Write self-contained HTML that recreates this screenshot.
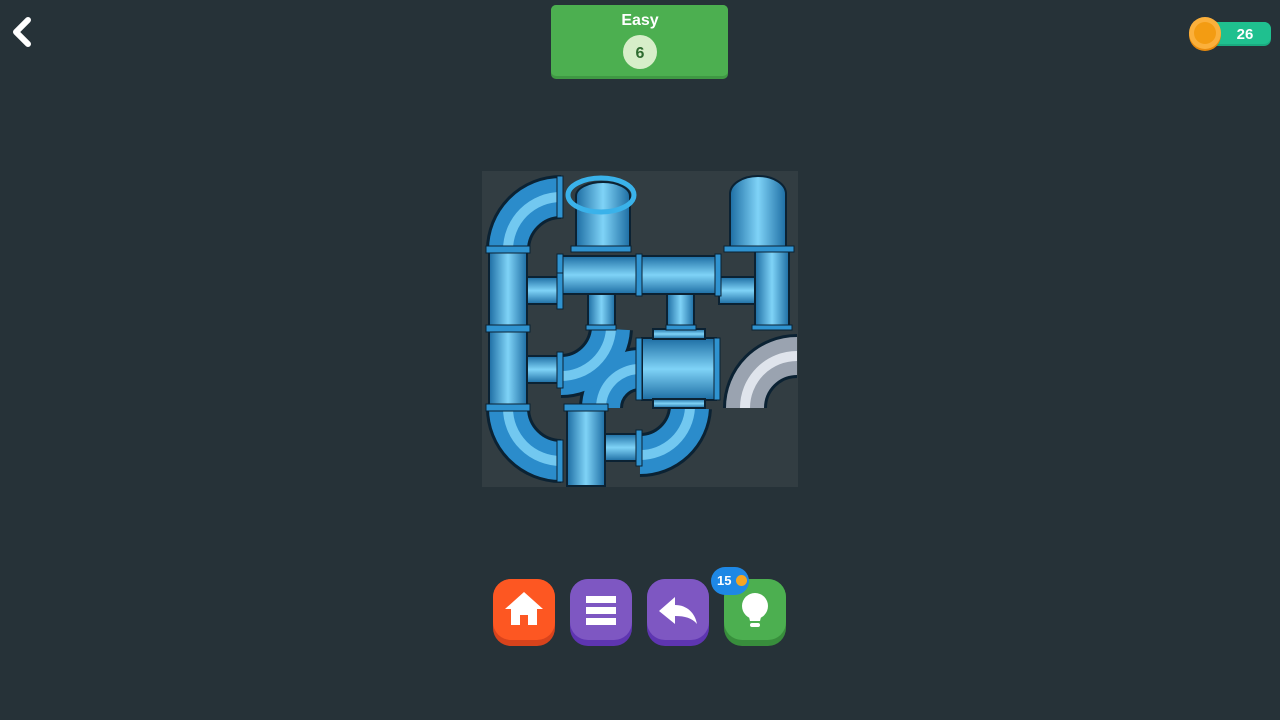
<!DOCTYPE html>
<html><head><style>
body{margin:0;width:1280px;height:720px;background:#263238;overflow:hidden;font-family:"Liberation Sans",sans-serif;position:relative}
.btn{position:absolute;top:579px;width:62px;height:67px;border-radius:18px}
.btn svg{position:absolute;left:0;top:0}
</style></head><body>
<svg style="position:absolute;left:0;top:0" width="1280" height="720">
<path d="M28 20 L16 32 L28 44" fill="none" stroke="#fff" stroke-width="6" stroke-linecap="round" stroke-linejoin="round"/>
<rect x="551" y="5" width="177" height="74" rx="5" fill="#3f9843"/>
<rect x="551" y="5" width="177" height="71" rx="5" fill="#4caf50"/>
<text x="640" y="25" text-anchor="middle" font-size="16" font-weight="bold" fill="#fff">Easy</text>
<circle cx="640" cy="52" r="17" fill="#d7eec9"/>
<text x="640" y="58" text-anchor="middle" font-size="16" font-weight="bold" fill="#2e6b30">6</text>
<rect x="1198" y="22" width="73" height="24" rx="7" fill="#1aab80"/>
<rect x="1198" y="22" width="73" height="22" rx="7" fill="#1fc08f"/>
<text x="1245" y="39" text-anchor="middle" font-size="15" font-weight="bold" fill="#fff">26</text>
<circle cx="1205" cy="35" r="16" fill="#e88a0c"/>
<circle cx="1205" cy="33" r="16" fill="#fbb03b"/>
<circle cx="1205" cy="33" r="11" fill="#f39c12"/>
<rect x="482" y="171" width="316" height="316" fill="#323d42"/>
<defs>
<linearGradient id="gv" x1="0" x2="1" y1="0" y2="0"><stop offset="0" stop-color="#1d6da3"/><stop offset=".5" stop-color="#7fd3f7"/><stop offset="1" stop-color="#1d6da3"/></linearGradient>
<linearGradient id="gh" x1="0" x2="0" y1="0" y2="1"><stop offset="0" stop-color="#1d6da3"/><stop offset=".5" stop-color="#7fd3f7"/><stop offset="1" stop-color="#1d6da3"/></linearGradient>
</defs>
<g fill="none">
<g stroke="#0b2233" stroke-width="44">
<path d="M640 369 A39 39 0 0 0 601 408"/>
<path d="M561 197 A53 53 0 0 0 508 250"/>
<path d="M508 408 A53 53 0 0 0 561 461"/>
<path d="M561 376 A50 50 0 0 0 611 329"/>
<path d="M640 455 A50 50 0 0 0 690 408"/>
<path d="M797 356 A52 52 0 0 0 745 408"/>
</g>
<g stroke="#2b8ccb" stroke-width="38">
<path d="M640 369 A39 39 0 0 0 601 408"/>
<path d="M561 197 A53 53 0 0 0 508 250"/>
<path d="M508 408 A53 53 0 0 0 561 461"/>
<path d="M561 376 A50 50 0 0 0 611 329"/>
<path d="M640 455 A50 50 0 0 0 690 408"/>
</g>
<path d="M797 356 A52 52 0 0 0 745 408" stroke="#9aa3b0" stroke-width="38"/>
<path d="M797 356 A52 52 0 0 0 745 408" stroke="#dfe4ec" stroke-width="10"/>
<g stroke="#72c8f0" stroke-width="10">
<path d="M640 369 A39 39 0 0 0 601 408"/>
<path d="M561 197 A53 53 0 0 0 508 250"/>
<path d="M508 408 A53 53 0 0 0 561 461"/>
<path d="M561 376 A50 50 0 0 0 611 329"/>
<path d="M640 455 A50 50 0 0 0 690 408"/>
</g>
</g>
<g stroke="#0b2233" stroke-width="2">
<rect x="489" y="250" width="38" height="158" fill="url(#gv)"/>
<rect x="527" y="277" width="34" height="27" fill="url(#gh)"/>
<rect x="527" y="356" width="34" height="27" fill="url(#gh)"/>
<rect x="561" y="256" width="158" height="38" fill="url(#gh)"/>
<rect x="588" y="294" width="27" height="35" fill="url(#gv)"/>
<rect x="667" y="294" width="27" height="35" fill="url(#gv)"/>
<rect x="719" y="277" width="36" height="27" fill="url(#gh)"/>
<rect x="755" y="250" width="34" height="79" fill="url(#gv)"/>
<rect x="567" y="408" width="38" height="78" fill="url(#gv)"/>
<rect x="605" y="434" width="35" height="27" fill="url(#gh)"/>
<rect x="642" y="338" width="74" height="62" fill="url(#gh)"/>
<rect x="653" y="329" width="52" height="10" fill="url(#gh)"/>
<rect x="653" y="399" width="52" height="9" fill="url(#gh)"/>
<path d="M576 250 V196 a27 14 0 0 1 54 0 V250 Z" fill="url(#gv)"/>
<path d="M730 250 V194 a28 18 0 0 1 56 0 V250 Z" fill="url(#gv)"/>
</g>
<ellipse cx="601" cy="195" rx="33" ry="17" fill="none" stroke="#3ab2ea" stroke-width="5"/>
<g fill="#2f93d0" stroke="#0b2233" stroke-width="1">
<rect x="486" y="246" width="44" height="7"/><rect x="486" y="325" width="44" height="7"/><rect x="486" y="404" width="44" height="7"/>
<rect x="571" y="246" width="60" height="6"/><rect x="724" y="246" width="70" height="6"/>
<rect x="557" y="176" width="6" height="42"/><rect x="557" y="254" width="6" height="42"/><rect x="636" y="254" width="6" height="42"/><rect x="715" y="254" width="6" height="42"/>
<rect x="557" y="273" width="6" height="36"/><rect x="557" y="352" width="6" height="36"/>
<rect x="564" y="404" width="44" height="7"/><rect x="636" y="430" width="6" height="36"/>
<rect x="557" y="440" width="6" height="42"/><rect x="752" y="325" width="40" height="5"/>
<rect x="586" y="325" width="30" height="5"/><rect x="666" y="325" width="30" height="5"/>
<rect x="636" y="338" width="6" height="62"/><rect x="714" y="338" width="6" height="62"/>
</g>
</svg>
<div class="btn" style="left:493px;background:#d8431c"><div style="height:61px;border-radius:18px;background:#fd5722"></div>
<svg width="62" height="62"><path d="M31 13 L12 30 H18 V46 H27 V36 H35 V46 H44 V30 H50 Z" fill="#fff"/></svg></div>
<div class="btn" style="left:570px;background:#5e35b1"><div style="height:61px;border-radius:18px;background:#7e57c2"></div>
<svg width="62" height="62"><rect x="16" y="17" width="30" height="7" fill="#fff"/><rect x="16" y="28" width="30" height="7" fill="#fff"/><rect x="16" y="39" width="30" height="7" fill="#fff"/></svg></div>
<div class="btn" style="left:647px;background:#5e35b1"><div style="height:61px;border-radius:18px;background:#7e57c2"></div>
<svg width="62" height="62"><path d="M12 32 L28 18 V26 C40 26 48 34 50 45 C45 39 38 37 28 37 V45 Z" fill="#fff"/></svg></div>
<div class="btn" style="left:724px;background:#388e3c"><div style="height:61px;border-radius:18px;background:#4caf50"></div>
<svg width="62" height="62"><circle cx="31" cy="27" r="13" fill="#fff"/><path d="M24 34 H38 L36 42 H26 Z" fill="#fff"/><rect x="26" y="44" width="10" height="4" rx="2" fill="#fff"/></svg></div>
<div style="position:absolute;left:711px;top:567px;width:38px;height:28px;border-radius:14px;background:#1e88e5"></div>
<div style="position:absolute;left:717px;top:573px;font-size:13px;font-weight:bold;color:#fff">15</div>
<div style="position:absolute;left:736px;top:575px;width:11px;height:11px;border-radius:50%;background:#f5a623"></div>
</body></html>
